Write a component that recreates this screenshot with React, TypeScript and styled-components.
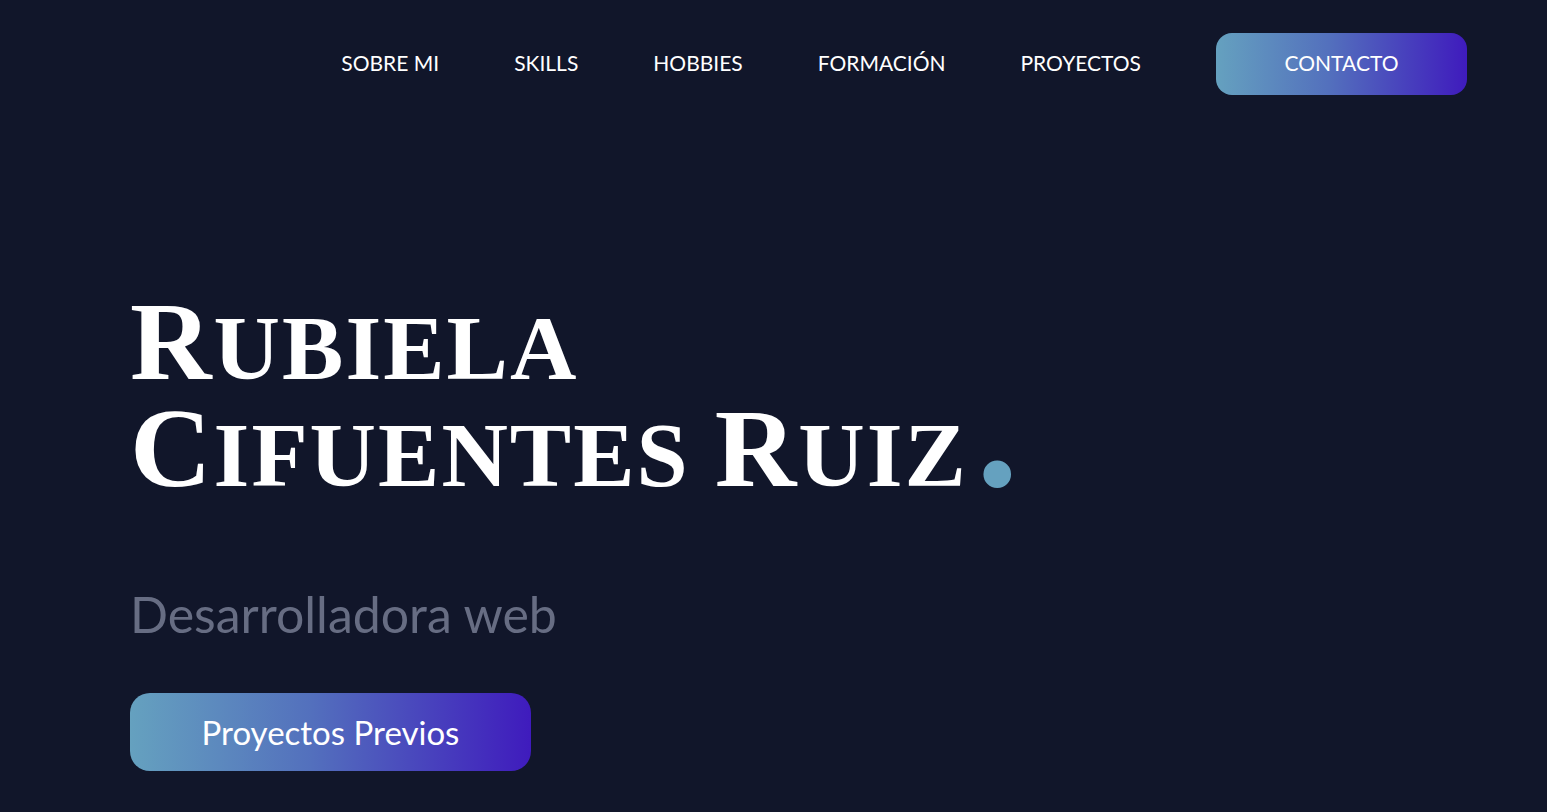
import React from "react";
import styled, { createGlobalStyle } from "styled-components";

const Global = createGlobalStyle`
  html, body { margin: 0; padding: 0; background: #11162a; }
  * { box-sizing: border-box; }
`;

const gradient = "linear-gradient(90deg, #65a1bf 0%, #5370bd 45%, #3f1bbd 100%)";

const Page = styled.div`
  min-height: 812px;
  background: #11162a;
  color: #ffffff;
  font-family: Lato, "Open Sans", sans-serif;
`;

const Header = styled.header`
  display: flex;
  justify-content: flex-end;
  align-items: center;
  padding: 33px 80px 0 0;
`;

const Nav = styled.nav`
  display: flex;
  align-items: center;
  gap: 75px;
`;

const NavLink = styled.a`
  color: #ffffff;
  font-size: 21px;
  text-decoration: none;
  text-transform: uppercase;
  padding-bottom: 4px;
`;

const ContactButton = styled.a`
  display: flex;
  align-items: center;
  justify-content: center;
  width: 251px;
  height: 62px;
  padding-bottom: 3px;
  border-radius: 16px;
  background: ${gradient};
  color: #ffffff;
  font-size: 21px;
  text-decoration: none;
`;

const Hero = styled.section`
  padding: 0 0 0 130px;
  display: flex;
  flex-direction: column;
  align-items: flex-start;
`;

const Title = styled.h1`
  margin: 200px 0 0 0;
  font-family: "Liberation Serif", "Times New Roman", serif;
  font-weight: 700;
  font-size: 92px;
  line-height: 107px;
  letter-spacing: 2px;
  color: #ffffff;
  text-transform: uppercase;
`;

const Initial = styled.span`
  font-size: 113px;
  line-height: 92px;
`;

const Dot = styled.span`
  color: #65a1bf;
  font-size: 170px;
  line-height: 0;
  margin-left: 8px;
`;

const Subtitle = styled.p`
  margin: 75px 0 0 0;
  font-size: 50px;
  color: #676d83;
  font-weight: 400;
`;

const PrimaryButton = styled.a`
  margin-top: 49px;
  display: flex;
  align-items: center;
  justify-content: center;
  width: 401px;
  height: 78px;
  border-radius: 20px;
  background: ${gradient};
  color: #ffffff;
  font-size: 33px;
  text-decoration: none;
`;

const items = ["Sobre mi", "Skills", "Hobbies", "Formación", "Proyectos"];

export default function App() {
  return (
    <Page>
      <Global />
      <Header>
        <Nav>
          {items.map((i) => (
            <NavLink key={i} href="#">{i}</NavLink>
          ))}
          <ContactButton href="#">CONTACTO</ContactButton>
        </Nav>
      </Header>
      <Hero>
        <Title>
          <Initial>R</Initial>ubiela
          <br />
          <Initial>C</Initial>ifuentes <Initial>R</Initial>uiz<Dot>.</Dot>
        </Title>
        <Subtitle>Desarrolladora web</Subtitle>
        <PrimaryButton href="#">Proyectos Previos</PrimaryButton>
      </Hero>
    </Page>
  );
}
